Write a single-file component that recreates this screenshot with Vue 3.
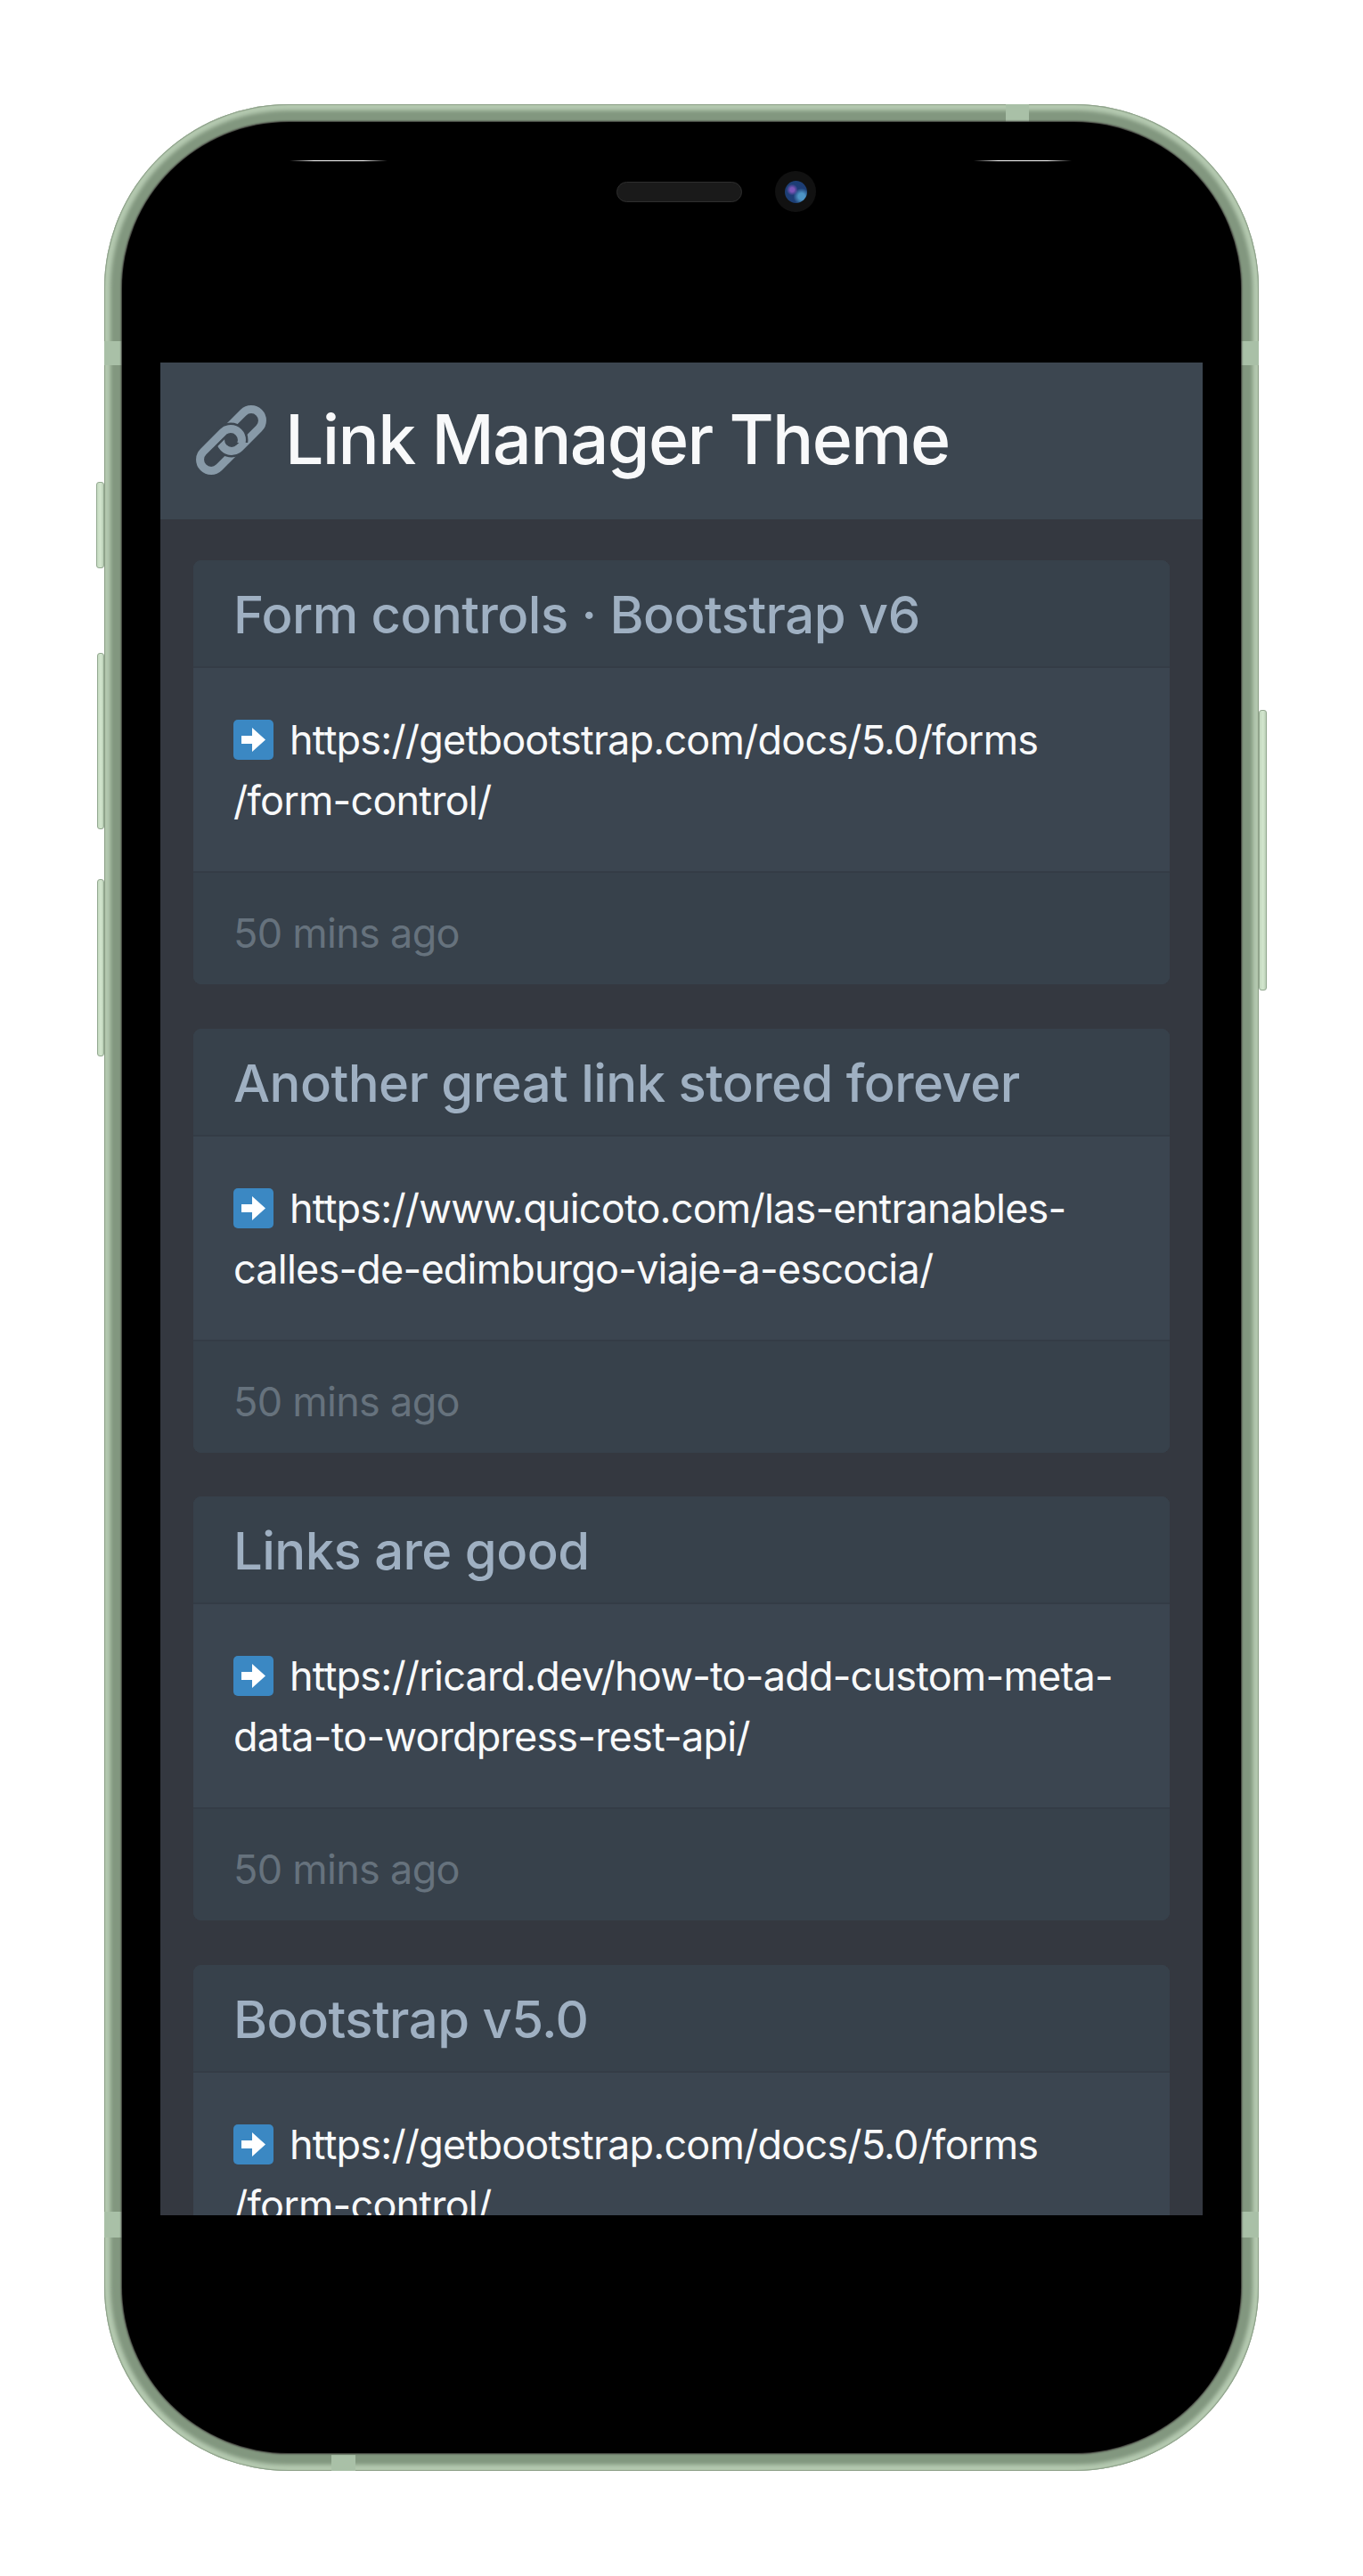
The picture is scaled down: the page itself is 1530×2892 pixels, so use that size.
<script setup>
const cards = [
  { title: 'Form controls · Bootstrap v6', lines: ['https://getbootstrap.com/docs/5.0/forms', '/form-control/'] },
  { title: 'Another great link stored forever', lines: ['https://www.quicoto.com/las-entranables-', 'calles-de-edimburgo-viaje-a-escocia/'] },
  { title: 'Links are good', lines: ['https://ricard.dev/how-to-add-custom-meta-', 'data-to-wordpress-rest-api/'] },
  { title: 'Bootstrap v5.0', lines: ['https://getbootstrap.com/docs/5.0/forms', '/form-control/'] },
]
</script>

<template>
  <div class="stage">
    <div class="phone">
      <span class="btn btn-l1"></span>
      <span class="btn btn-l2"></span>
      <span class="btn btn-l3"></span>
      <span class="btn btn-r"></span>
      <div class="frame">
        <span class="band band-t"></span>
        <span class="band band-b"></span>
        <span class="band band-lt"></span>
        <span class="band band-rt"></span>
        <span class="band band-lb"></span>
        <span class="band band-rb"></span>
        <div class="glass">
          <div class="bezel-top">
            <span class="glint glint-l"></span>
            <span class="glint glint-r"></span>
            <div class="sensors">
              <span class="speaker"></span>
              <span class="camera"><span class="lens"></span></span>
            </div>
          </div>
          <div class="screen">
            <header class="navbar">
              <svg class="link-icon" viewBox="0 0 80 80" aria-hidden="true">
                <defs>
                  <clipPath id="chain-cross"><rect x="30" y="42" width="40" height="30"/></clipPath>
                </defs>
                <rect class="ln" x="23" y="15.500" width="56" height="25" rx="12.500" transform="rotate(-45 51 28)"/>
                <rect class="halo" x="0" y="37.500" width="56" height="25" rx="12.500" transform="rotate(-45 28 50)"/>
                <rect class="ln" x="0" y="37.500" width="56" height="25" rx="12.500" transform="rotate(-45 28 50)"/>
                <g clip-path="url(#chain-cross)">
                  <rect class="halo" x="23" y="15.500" width="56" height="25" rx="12.500" transform="rotate(-45 51 28)"/>
                  <rect class="ln" x="23" y="15.500" width="56" height="25" rx="12.500" transform="rotate(-45 51 28)"/>
                </g>
              </svg>
              <h1 class="brand">Link Manager Theme</h1>
            </header>
            <main class="list">
              <article v-for="card in cards" :key="card.title" class="card">
                <h5 class="card-head">{{ card.title }}</h5>
                <div class="card-body">
                  <p class="url">
                    <svg class="arrow" viewBox="0 0 45 45" aria-hidden="true">
                      <rect width="45" height="45" rx="5" fill="#3b88c3"/>
                      <path fill="#fff" d="M9 18H21V9L36 22.500 21 36V27H9Z"/>
                    </svg>
                    <span>{{ card.lines[0] }}</span><br>{{ card.lines[1] }}
                  </p>
                </div>
                <footer class="card-foot">50 mins ago</footer>
              </article>
            </main>
          </div>
          <div class="bezel-bottom"></div>
        </div>
      </div>
    </div>
  </div>
</template>

<style>
html, body { margin: 0; background: #fff; }
</style>

<style scoped>
.stage {
  width: 1530px;
  height: 2892px;
  padding: 117px 117px 118px;
  box-sizing: border-box;
  background: #fff;
  overflow: hidden;
  font-family: Inter, "Liberation Sans", sans-serif;
}
.phone { position: relative; width: 1296px; height: 2657px; }
.btn {
  position: absolute;
  width: 9px;
  box-sizing: border-box;
  border: 1px solid #93a890;
  border-radius: 3px;
  background: linear-gradient(90deg, #c4d9c0, #d3e6ce 55%, #b9ceb5);
}
.btn-l1 { left: -9px; top: 424px; height: 97px; }
.btn-l2 { left: -8px; top: 616px; height: 198px; width: 8px; }
.btn-l3 { left: -8px; top: 870px; height: 199px; width: 8px; }
.btn-r { right: -9px; top: 680px; height: 315px; }
.frame {
  position: relative;
  height: 100%;
  padding: 20px;
  box-sizing: border-box;
  border-radius: 207px;
  background: #82977f;
  box-shadow: inset 0 0 1px 1px #8a9d86, inset 0 0 4px 7px #b4c9b0;
}
.band { position: absolute; background: #a9c0a7; }
.band-t { left: 1012px; top: 0; width: 26px; height: 20px; }
.band-b { left: 255px; bottom: 0; width: 27px; height: 18px; }
.band-lt { left: 0; top: 266px; width: 20px; height: 27px; }
.band-rt { right: 0; top: 266px; width: 20px; height: 27px; }
.band-lb { left: 0; top: 2366px; width: 20px; height: 29px; }
.band-rb { right: 0; top: 2366px; width: 20px; height: 29px; }
.glass {
  position: relative;
  height: 100%;
  display: flex;
  flex-direction: column;
  align-items: center;
  border-radius: 187px;
  background: #000;
  box-shadow: 0 0 2px 1px #332f2f;
  overflow: hidden;
}
.bezel-top { position: relative; flex: 0 0 270px; width: 100%; }
.glint {
  position: absolute;
  top: 43px;
  width: 110px;
  height: 1px;
  background: linear-gradient(90deg, #0000, #fff 25%, #fff 75%, #0000);
}
.glint-l { left: 188px; }
.glint-r { left: 956px; }
.sensors {
  position: absolute;
  left: 555px;
  top: 55px;
  display: flex;
  align-items: center;
  gap: 37px;
}
.speaker {
  width: 141px;
  height: 23px;
  box-sizing: border-box;
  border: 1px solid #2e2e2e;
  border-radius: 12px;
  background: #1a1a1a;
}
.camera {
  display: flex;
  align-items: center;
  justify-content: center;
  width: 46px;
  height: 46px;
  border-radius: 50%;
  background: #111;
}
.lens {
  width: 25px;
  height: 25px;
  border-radius: 50%;
  background:
    radial-gradient(circle at 33% 40%, #7d56b8 0 10%, #0000 28%),
    radial-gradient(circle at 75% 70%, #4d94c4 0 14%, #0000 36%),
    radial-gradient(circle at 50% 50%, #1f3a78, #1c3f74 75%, #122242);
}
.screen {
  flex: 0 0 2080px;
  width: 1170px;
  display: flex;
  flex-direction: column;
  overflow: hidden;
  background: #343840;
}
.navbar {
  flex: 0 0 176px;
  display: flex;
  align-items: center;
  gap: 20px;
  padding: 0 40px;
  box-sizing: border-box;
  background: #3c4650;
}
.link-icon { width: 80px; height: 80px; }
.ln { fill: none; stroke: #889aa8; stroke-width: 9; }
.halo { fill: none; stroke: #3c4650; stroke-width: 14; }
.brand {
  margin: 0 0 4px;
  font-size: 77px;
  font-weight: 500;
  line-height: 1;
  letter-spacing: -1.67px;
  color: #f8f9fa;
}
.list {
  padding: 46px 37px 0;
  display: flex;
  flex-direction: column;
  gap: 49.6px;
}
.card {
  flex: none;
  border-radius: 9px;
  overflow: hidden;
  background: #3b4550;
}
.card-head {
  height: 121px;
  margin: 0;
  padding: 0 45px;
  box-sizing: border-box;
  border-bottom: 2px solid #343c46;
  background: #37414b;
  color: #9fb0c2;
  font-size: 58px;
  font-weight: 500;
  line-height: 122px;
  letter-spacing: -0.54px;
}
.card-body { height: 228px; padding: 0 45px; box-sizing: border-box; }
.url {
  margin: 0;
  padding-top: 47px;
  color: #f8f9fa;
  font-size: 45px;
  line-height: 68px;
  letter-spacing: -0.8px;
  white-space: nowrap;
}
.arrow {
  width: 45px;
  height: 45px;
  margin-right: 18px;
  vertical-align: -6px;
}
.card-foot {
  height: 127px;
  padding: 0 45px;
  box-sizing: border-box;
  border-top: 2px solid #343c46;
  background: #37414b;
  color: #66727d;
  font-size: 45px;
  line-height: 136px;
  letter-spacing: -0.7px;
}
.bezel-bottom { flex: 1; }
</style>
